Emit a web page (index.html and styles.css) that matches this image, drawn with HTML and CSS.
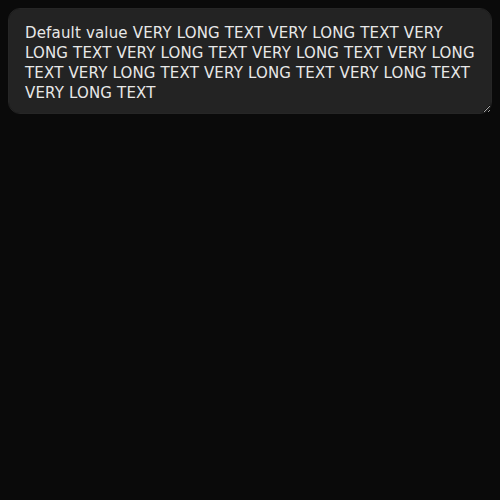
FILE: index.html
```html
<!DOCTYPE html>
<html>
<head>
<meta charset="utf-8">
<link rel="stylesheet" href="styles.css">
</head>
<body>
<textarea class="field" id="field" autofocus>Default value VERY LONG TEXT VERY LONG TEXT VERY LONG TEXT VERY LONG TEXT VERY LONG TEXT VERY LONG TEXT VERY LONG TEXT VERY LONG TEXT VERY LONG TEXT VERY LONG TEXT</textarea>
<script src="app.js"></script>
</body>
</html>
```
FILE: styles.css
```css
html, body {
  background: #0a0a0a;
}
body {
  margin: 8px;
  font-family: "DejaVu Sans", sans-serif;
}
.field {
  display: block;
  box-sizing: border-box;
  width: 100%;
  height: 106px;
  margin: 0;
  padding: 14px 16px 12px;
  border: 1px solid #262626;
  border-radius: 12px;
  background: #232323;
  color: #e8e8e8;
  font-family: "DejaVu Sans", sans-serif;
  font-size: 15px;
  line-height: 20px;
  letter-spacing: 0.17px;
  outline: none;
  caret-color: #5b8def;
}
```
FILE: app.js
```js
var f = document.getElementById('field');
f.focus();
f.setSelectionRange(f.value.length, f.value.length);
```
